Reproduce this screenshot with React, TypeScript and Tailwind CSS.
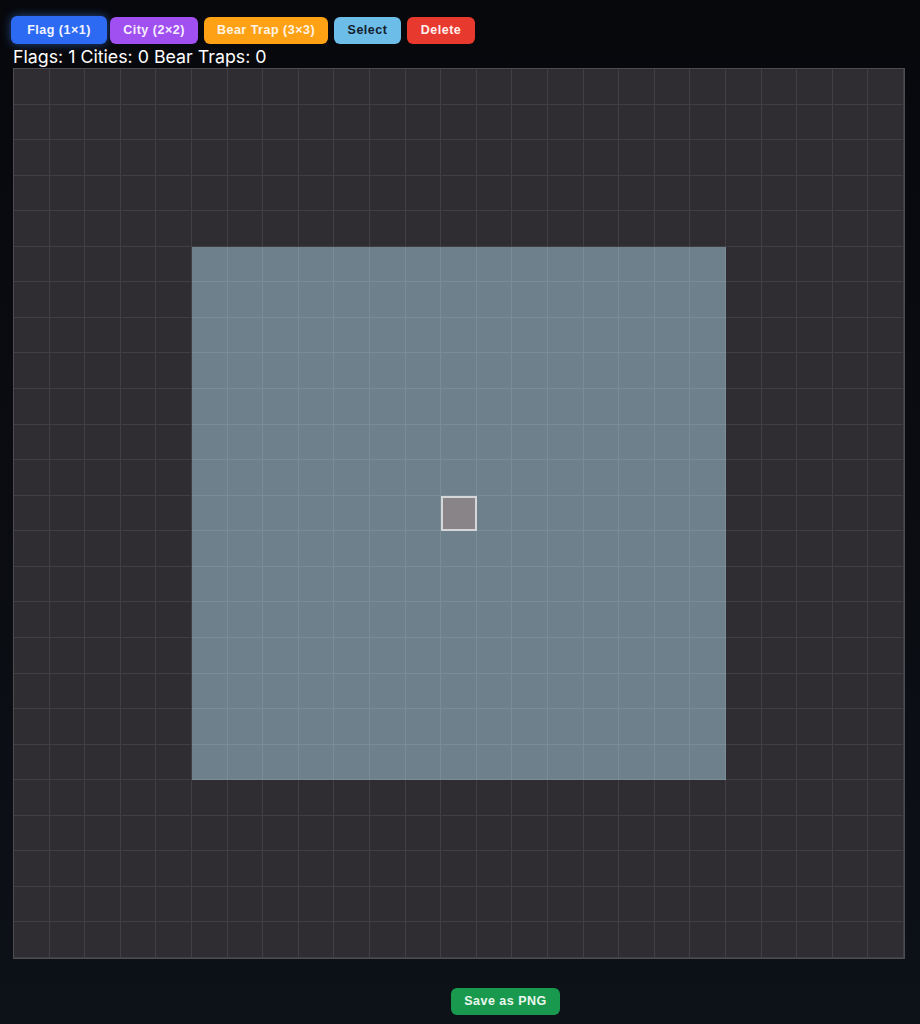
import React from "react";

const N = 25;

function Cell({ r, c }: { r: number; c: number }) {
  const inZone = r >= 5 && r <= 19 && c >= 5 && c <= 19;
  const isFlag = r === 12 && c === 12;
  if (isFlag) {
    return <div className="bg-[#888487] border-2 border-[#d4d6d8]" />;
  }
  return (
    <div
      className={
        inZone
          ? "bg-[#6e808b] border-r border-b border-[#7a8c96]"
          : "bg-[#2f2d31] border-r border-b border-[#403f44]"
      }
    />
  );
}

export default function App() {
  const cells: React.ReactNode[] = [];
  for (let r = 0; r < N; r++) {
    for (let c = 0; c < N; c++) {
      cells.push(<Cell key={`${r}-${c}`} r={r} c={c} />);
    }
  }
  const btn =
    "h-[27px] rounded-[6px] text-[12.5px] font-bold tracking-[0.5px] flex items-center justify-center font-['Liberation_Sans',Arial,sans-serif]";
  return (
    <div className="w-[920px] h-[1024px] overflow-hidden bg-gradient-to-b from-[#07080c] via-[#0a0c11] to-[#0d1118] text-white">
      <div className="pl-[13px] pt-[16px] flex items-center gap-[6px]">
        <button className={`${btn} -ml-[2px] -mr-[3px] w-[96px] h-[28px] bg-[#2d6af4] text-[#f2f5ff] shadow-[0_0_10px_rgba(59,130,246,0.55)]`}>
          Flag (1×1)
        </button>
        <button className={`${btn} w-[88px] bg-[#a04ff0] text-[#f6eeff]`}>City (2×2)</button>
        <button className={`${btn} w-[124px] bg-[#ffa114] text-[#fff4e4]`}>Bear Trap (3×3)</button>
        <button className={`${btn} w-[67px] bg-[#6cbde8] text-[#14202e]`}>Select</button>
        <button className={`${btn} w-[68px] bg-[#e8392e] text-[#fff0ee]`}>Delete</button>
      </div>
      <div className="pl-[13px] mt-[1px] h-[23px] text-[17.8px] leading-[23px] font-['Inter',sans-serif] text-white">
        Flags: 1 Cities: 0 Bear Traps: 0
      </div>
      <div className="ml-[13px] w-[892px] h-[891px] border border-[#4d4c50] bg-[#2f2d31] grid grid-cols-[repeat(25,1fr)] grid-rows-[repeat(25,1fr)]">
        {cells}
      </div>
      <div className="flex pl-[451px] mt-[29px]">
        <button className={`${btn} w-[109px] h-[26px] bg-[#19994d] text-[#eaf7ee]`}>Save as PNG</button>
      </div>
    </div>
  );
}
